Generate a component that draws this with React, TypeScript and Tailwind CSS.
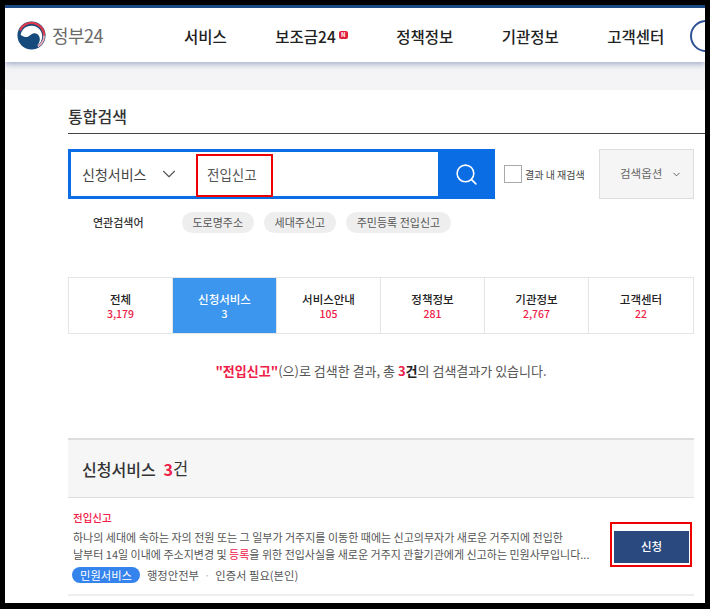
import { ChevronDown, Search } from "lucide-react";

const font = { fontFamily: '"Noto Sans CJK KR", "Noto Sans", sans-serif' };

const navItems = ["서비스", "보조금24", "정책정보", "기관정보", "고객센터"];
const related = ["도로명주소", "세대주신고", "주민등록 전입신고"];
const tabs = [
  { name: "전체", count: "3,179" },
  { name: "신청서비스", count: "3", active: true },
  { name: "서비스안내", count: "105" },
  { name: "정책정보", count: "281" },
  { name: "기관정보", count: "2,767" },
  { name: "고객센터", count: "22" },
];

function Logo() {
  return (
    <svg width="29" height="29" viewBox="0 0 32 32">
      <circle cx="16" cy="16" r="15.500" fill="#174a7c" />
      <path d="M4 15A12 12 0 1 1 22 27.400C25 24 26 20 24.500 17C23 13.500 19 12.500 16 14.500C13.500 16.500 11 18.500 8 17.500C6 17 4.700 16 4 15Z" fill="#fff" />
      <path d="M3.200 10.500A13.900 13.900 0 0 1 29.900 16" fill="none" stroke="#dd3a4c" strokeWidth="2.600" />
      <path d="M29.900 16A13.900 13.900 0 0 1 23 28" fill="none" stroke="#f3a9b2" strokeWidth="2" />
    </svg>
  );
}

export default function App() {
  return (
    <div className="w-[710px] h-[609px] overflow-hidden bg-black pl-[5px] pt-[5px] pr-[5px] pb-[6px]" style={font}>
      <div className="relative h-[598px] overflow-hidden bg-white">
        <header className="h-[57px] border-t-[3px] border-[#1c4a85] bg-white shadow-[0_2px_6px_rgba(90,110,160,0.55)] relative flex items-center">
          <div className="ml-[12px] flex w-[150px] items-center gap-[6px]">
            <Logo />
            <span className="text-[18px] tracking-[-0.5px] text-[#6b6b6b]">정부24</span>
          </div>
          <nav className="ml-[17px] mt-[3px] flex gap-[48.500px] text-[15.500px] font-medium text-[#222]">
            {navItems.map((item) => (
              <span key={item} className="flex whitespace-nowrap">
                {item}
                {item === "보조금24" && (
                  <span className="ml-[3px] mt-[6px] flex h-[8px] w-[9px] items-center justify-center rounded-[2px] bg-[#e0213c] text-[6px] font-bold leading-none text-white">N</span>
                )}
              </span>
            ))}
          </nav>
          <div className="absolute -right-[17px] top-[12px] h-[32px] w-[32px] rounded-full border-2 border-[#2f5296]" />
        </header>

        <div className="h-[28px] bg-[#f4f4f6]" />

        <main className="pl-[63px]">
          <h1 className="flex h-[44px] items-end border-b-[1.5px] border-[#444] pb-[5px] text-[16px] font-medium text-[#333]">통합검색</h1>

          <div className="mt-[15px] flex w-[626px] items-start">
            <div className="flex h-[50px] w-[427px] border-[3px] border-r-0 border-[#0a6de4]">
              <div className="flex w-[125px] items-center pl-[11px] text-[14px] text-[#444]">
                신청서비스
                <ChevronDown className="ml-[12px] h-[22px] w-[22px] text-[#555]" strokeWidth={1.2} />
              </div>
              <div className="flex flex-1 items-center pl-[11px] text-[13.500px] text-[#555]">전입신고</div>
              <div className="flex w-[57px] items-center justify-center bg-[#0a6de4]">
                <Search className="h-[25px] w-[25px] text-white" strokeWidth={1.5} />
              </div>
            </div>
            <label className="ml-[9px] mt-[16px] flex items-center gap-[3px] text-[10px] text-[#444]">
              <span className="h-[18px] w-[18px] border border-[#aaa] bg-white" />
              결과 내 재검색
            </label>
            <div className="ml-auto flex h-[50px] w-[95px] items-center gap-[9px] border border-[#ddd] bg-[#f5f5f5] pl-[20px] text-[11.500px] text-[#666]">
              검색옵션
              <ChevronDown className="h-[11px] w-[11px] text-[#555]" strokeWidth={2} />
            </div>
          </div>

          <div className="mt-[12px] flex h-[22px] items-center">
            <span className="ml-[25px] w-[89px] text-[11px] font-medium text-[#333]">연관검색어</span>
            <div className="flex gap-[10.500px]">
              {related.map((item) => (
                <span key={item} className="flex h-[21px] items-center rounded-full bg-[#eee] px-[10.500px] text-[11px] text-[#555]">{item}</span>
              ))}
            </div>
          </div>

          <div className="mt-[44px] grid h-[57px] w-[626px] grid-cols-6 border border-[#e5e5e5]">
            {tabs.map((tab) => (
              <div key={tab.name} className={`flex flex-col items-center justify-center border-r border-[#e5e5e5] pt-[2px] last:border-r-0 ${tab.active ? "bg-[#3c96ee] text-white" : "text-[#222]"}`}>
                <span className="text-[11.500px] font-medium leading-[15px]">{tab.name}</span>
                <span className={`text-[10.500px] font-medium leading-[14px] ${tab.active ? "text-white" : "text-[#ee2048]"}`}>{tab.count}</span>
              </div>
            ))}
          </div>

          <p className="mt-[27px] w-[626px] text-center text-[13px] leading-[20px] text-[#555]">
            <b className="text-[#ee2048]">"전입신고"</b>(으)로 검색한 결과, 총 <b className="text-[#ee2048]">3</b><b className="text-[#222]">건</b>의 검색결과가 있습니다.
          </p>

          <section className="mt-[57px] w-[626px]">
            <div className="flex h-[60px] items-center border-y-[2px] border-t-[#ddd] border-b-[#ddd] bg-[#f6f6f6] pl-[14px] text-[16px] text-[#333]" style={{ borderBottomWidth: 1 }}>
              <span className="font-medium">신청서비스</span>
              <b className="ml-[8px] text-[#ee2048]">3</b><span className="text-[16.500px]">건</span>
            </div>
            <div className="flex h-[98px] border-b-2 border-[#eee] pl-[5px]">
              <div className="w-[535px]">
                <div className="mt-[11px] text-[10.500px] font-medium leading-[17px] text-[#ee2048]">전입신고</div>
                <p className="mt-[3px] whitespace-nowrap text-[11px] leading-[16.500px] text-[#555]">
                  하나의 세대에 속하는 자의 전원 또는 그 일부가 거주지를 이동한 때에는 신고의무자가 새로운 거주지에 전입한<br />
                  날부터 14일 이내에 주소지변경 및 <span className="text-[#ee2048]">등록</span>을 위한 전입사실을 새로운 거주지 관할기관에게 신고하는 민원사무입니다...
                </p>
                <div className="mt-[5px] -ml-[1px] flex items-center text-[11.300px] text-[#555]">
                  <span className="flex h-[16px] items-center rounded-full bg-[#3583ec] px-[8px] text-white">민원서비스</span>
                  <span className="ml-[7px]">행정안전부</span>
                  <span className="mx-[5px] text-[#bbb]">·</span>
                  <span>인증서 필요(본인)</span>
                </div>
              </div>
              <button className="ml-[6px] mt-[33px] flex h-[32px] w-[75px] items-center justify-center bg-[#2a4a7f] text-[11.500px] font-medium text-white">신청</button>
            </div>
          </section>
        </main>

        <div className="absolute left-[191px] top-[149px] h-[43px] w-[77px] border-2 border-[#ee0000]" />
        <div className="absolute left-[605px] top-[517px] h-[45px] w-[82px] border-2 border-[#ee0000]" />
      </div>
    </div>
  );
}
